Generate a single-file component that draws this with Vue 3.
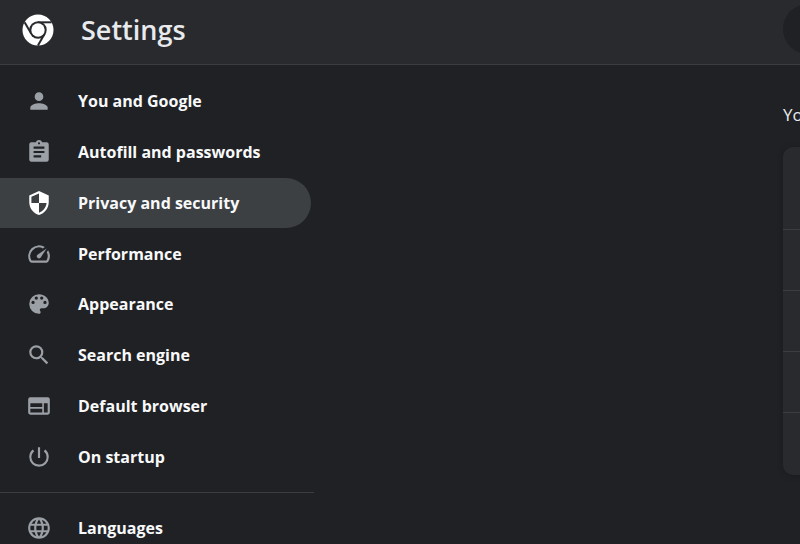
<script setup>
const groups = [
  [
    { label: 'You and Google', d: 'M12 12a4 4 0 1 0 0-8 4 4 0 0 0 0 8zm0 2c-2.67 0-8 1.34-8 4v2h16v-2c0-2.66-5.33-4-8-4z' },
    { label: 'Autofill and passwords', d: 'M19 3h-4.18C14.4 1.84 13.3 1 12 1s-2.4.84-2.82 2H5a2 2 0 0 0-2 2v14a2 2 0 0 0 2 2h14a2 2 0 0 0 2-2V5a2 2 0 0 0-2-2zm-7 0a1 1 0 1 1 0 2 1 1 0 0 1 0-2zm2 14H7v-2h7v2zm3-4H7v-2h10v2zm0-4H7V7h10v2z' },
    { label: 'Privacy and security', active: true, d: 'M12 1L3 5v6c0 5.55 3.84 10.74 9 12 5.16-1.26 9-6.45 9-12V5l-9-4zm0 11h7c-.53 4.12-3.28 7.79-7 8.94V12H5V6.3l7-3.11V12z' },
    { label: 'Performance', d: 'm20.38 8.57-1.23 1.85a8 8 0 0 1-.22 7.58H5.07A8 8 0 0 1 15.58 6.85l1.85-1.23A10 10 0 0 0 3.35 19a2 2 0 0 0 1.72 1h13.85a2 2 0 0 0 1.74-1 10 10 0 0 0-.27-10.44zm-9.79 6.84a2 2 0 0 0 2.83 0l5.66-8.49-8.49 5.66a2 2 0 0 0 0 2.83z' },
    { label: 'Appearance', d: 'M12 3a9 9 0 0 0 0 18c.83 0 1.5-.67 1.5-1.5 0-.39-.15-.74-.39-1.01-.23-.26-.38-.61-.38-.99 0-.83.67-1.5 1.5-1.5H16c2.76 0 5-2.24 5-5 0-4.42-4.03-8-9-8zm-5.5 9a1.5 1.5 0 1 1 0-3 1.5 1.5 0 0 1 0 3zm3-4a1.5 1.5 0 1 1 0-3 1.5 1.5 0 0 1 0 3zm5 0a1.5 1.5 0 1 1 0-3 1.5 1.5 0 0 1 0 3zm3 4a1.5 1.5 0 1 1 0-3 1.5 1.5 0 0 1 0 3z' },
    { label: 'Search engine', d: 'M15.5 14h-.79l-.28-.27A6.47 6.47 0 0 0 16 9.5 6.5 6.5 0 1 0 9.5 16c1.61 0 3.09-.59 4.23-1.57l.27.28v.79l5 4.99L20.49 19l-4.99-5zm-6 0a4.5 4.5 0 1 1 0-9 4.5 4.5 0 0 1 0 9z' },
    { label: 'Default browser', d: 'M20 4H4a2 2 0 0 0-2 2v12a2 2 0 0 0 2 2h16a2 2 0 0 0 2-2V6a2 2 0 0 0-2-2zm-5 14H4v-3.5h11V18zm0-5H4V9.500h11V13zm5 5h-3.500V9.500H20V18z' },
    { label: 'On startup', d: 'M13 3h-2v10h2V3zm4.83 2.17-1.42 1.42A6.92 6.92 0 0 1 19 12a7 7 0 1 1-11.42-5.42L6.17 5.17A8.932 8.932 0 0 0 3 12a9 9 0 0 0 18 0 8.932 8.932 0 0 0-3.17-6.83z' },
  ],
  [
    { label: 'Languages', d: 'M11.99 2C6.47 2 2 6.48 2 12s4.47 10 9.99 10C17.52 22 22 17.52 22 12S17.52 2 11.99 2zm6.93 6h-2.95a15.65 15.65 0 0 0-1.38-3.56A8.03 8.03 0 0 1 18.92 8zM12 4.04c.83 1.2 1.48 2.53 1.91 3.96h-3.82c.43-1.43 1.08-2.76 1.91-3.96zM4.26 14C4.1 13.36 4 12.69 4 12s.1-1.36.26-2h3.38a16.515 16.515 0 0 0 0 4H4.26zm.82 2h2.95c.32 1.25.78 2.45 1.38 3.56A7.987 7.987 0 0 1 5.08 16zm2.95-8H5.08a7.987 7.987 0 0 1 4.33-3.56A15.65 15.65 0 0 0 8.03 8zM12 19.96c-.83-1.2-1.48-2.53-1.91-3.96h3.82c-.43 1.43-1.08 2.76-1.91 3.96zM14.34 14H9.66a14.7 14.7 0 0 1 0-4h4.68a14.7 14.7 0 0 1 0 4zm.25 5.56c.6-1.11 1.06-2.31 1.38-3.56h2.95a8.03 8.03 0 0 1-4.33 3.56zM16.36 14a16.515 16.515 0 0 0 0-4h3.38c.16.64.26 1.31.26 2s-.1 1.36-.26 2h-3.38z' },
  ],
]
</script>

<template>
  <div class="page">
    <header class="topbar">
      <div class="brand">
        <svg class="logo" viewBox="0 0 32 32" aria-hidden="true">
          <circle cx="16" cy="16" r="15.5" fill="#fff" />
          <circle cx="16" cy="16" r="8.7" fill="#292a2d" />
          <g stroke="#292a2d" stroke-width="2" fill="none">
            <path d="M16 8.3H29.5" />
            <path d="M9.33 19.85 2.58 8.16" />
            <path d="M22.67 19.85 15.92 31.54" />
          </g>
          <circle cx="16" cy="16" r="6.7" fill="#fff" />
        </svg>
        <h1>Settings</h1>
      </div>
      <input class="search" type="search" aria-label="Search settings" />
    </header>
    <div class="body">
      <nav class="sidebar">
        <ul v-for="(group, i) in groups" :key="i" class="menu">
          <li v-for="item in group" :key="item.label">
            <a href="#" class="item" :class="{ active: item.active }">
              <svg class="icon" viewBox="0 0 24 24" aria-hidden="true">
                <path fill-rule="evenodd" :d="item.d" />
              </svg>
              {{ item.label }}
            </a>
          </li>
        </ul>
      </nav>
      <main class="content">
        <h2>You</h2>
        <div class="card">
          <div class="row first"></div>
          <div v-for="n in 4" :key="n" class="row"></div>
        </div>
      </main>
    </div>
  </div>
</template>

<style>
body {
  margin: 0;
  background: #202124;
}
</style>

<style scoped>
.page {
  height: 100vh;
  overflow: hidden;
  display: flex;
  flex-direction: column;
  background: #202124;
  color: #f1f3f4;
  font-family: "Open Sans", "Noto Sans", sans-serif;
}
.topbar {
  flex: none;
  display: grid;
  grid-template-columns: 314px 1fr;
  align-items: center;
  height: 64px;
  background: #292a2d;
  border-bottom: 1px solid #3c3d40;
}
.brand {
  display: flex;
  align-items: center;
  gap: 27px;
  padding: 0 0 4px 22px;
}
.logo {
  width: 32px;
  height: 32px;
}
h1 {
  margin: 0;
  font-size: 27px;
  line-height: 32px;
  font-weight: 600;
  color: #e8eaed;
}
.search {
  box-sizing: border-box;
  width: 680px;
  height: 50px;
  margin: 0 0 6px 469px;
  padding: 0 50px;
  border: 0;
  border-radius: 25px;
  background: #202124;
  color: #e8eaed;
  font: inherit;
}
.body {
  flex: 1;
  min-height: 0;
  display: grid;
  grid-template-columns: 314px 1fr;
}
.sidebar {
  padding-top: 11px;
}
.menu {
  display: grid;
  grid-auto-rows: minmax(50px, 1fr);
  margin: 0;
  padding: 0;
  list-style: none;
}
.menu:first-child {
  min-height: 406px;
}
.menu + .menu {
  margin-top: 10px;
  padding-top: 10px;
  border-top: 1px solid #3c3d40;
}
.item {
  box-sizing: border-box;
  display: flex;
  align-items: center;
  gap: 26px;
  height: 100%;
  margin-right: 3px;
  padding-left: 26px;
  border-radius: 0 26px 26px 0;
  color: #f8f9fa;
  font-size: 16px;
  font-weight: 700;
  text-decoration: none;
  white-space: nowrap;
}
.icon {
  flex: none;
  width: 26px;
  height: 26px;
  fill: #9aa0a6;
}
.active {
  background: #3c4043;
}
.active .icon {
  fill: #fff;
}
.content {
  min-width: 0;
  padding: 38px 0 0 469px;
}
h2 {
  margin: 0 0 20px;
  font-size: 17px;
  line-height: 24px;
  font-weight: 400;
  color: #e8eaed;
}
.card {
  width: 680px;
  padding-bottom: 2px;
  border-radius: 10px;
  background: #292a2d;
  box-shadow: 0 1px 6px rgba(0, 0, 0, 0.2);
}
.row {
  box-sizing: border-box;
  height: 61px;
  border-top: 1px solid #3c3d40;
}
.row.first {
  height: 82px;
  border-top: 0;
}
</style>
